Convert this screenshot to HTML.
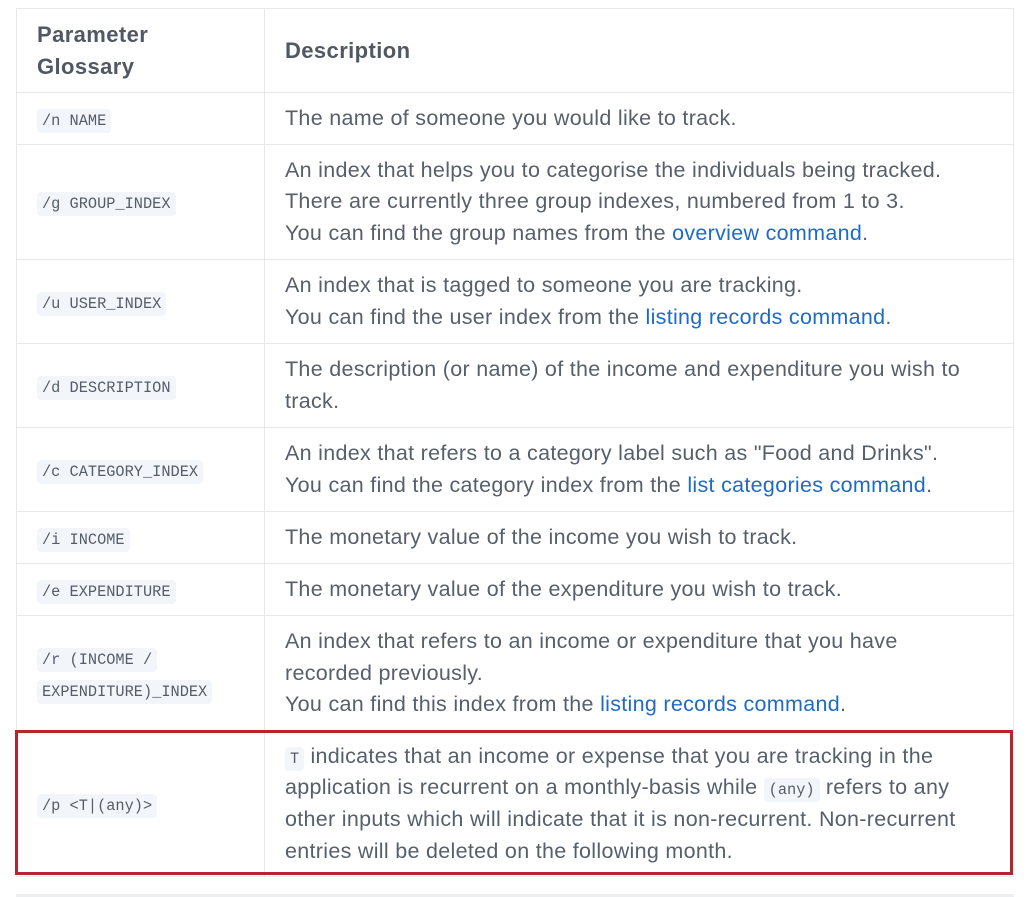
<!DOCTYPE html>
<html><head><meta charset="utf-8"><style>
body{margin:0;background:#fff;width:1030px;height:897px;overflow:hidden;font-family:"Liberation Sans",sans-serif;color:#575f6b}
table{position:absolute;left:16px;top:8px;border-collapse:collapse;width:998px}
td,th{border:1px solid #e6e8eb;padding:0 0 0 20px;vertical-align:middle;text-align:left;font-size:21.5px;letter-spacing:0.3px;line-height:31.6px;white-space:nowrap}
th{font-weight:bold;color:#505864;letter-spacing:0.4px;font-size:22px;line-height:32px}
td:first-child,th:first-child{width:227px}
code{font-family:"Liberation Mono",monospace;font-size:15.3px;letter-spacing:0;line-height:1;background:#f2f5f9;border-radius:4px;padding:3px 5px;color:#555d69}
a{color:#1f6bc4;text-decoration:none}
.red{position:absolute;left:15px;top:730px;width:992px;height:139px;border:3px solid #b5242f}
.bot{position:absolute;left:16px;top:894px;width:998px;height:3px;background:#eceef0}
</style></head><body>
<table>
<tr style="height:84px"><th>Parameter<br>Glossary</th><th>Description</th></tr>
<tr style="height:52px"><td><code>/n NAME</code></td><td>The name of someone you would like to track.</td></tr>
<tr style="height:115px"><td><code>/g GROUP_INDEX</code></td><td>An index that helps you to categorise the individuals being tracked.<br>There are currently three group indexes, numbered from 1 to 3.<br>You can find the group names from the <a>overview command</a>.</td></tr>
<tr style="height:84px"><td><code>/u USER_INDEX</code></td><td>An index that is tagged to someone you are tracking.<br>You can find the user index from the <a>listing records command</a>.</td></tr>
<tr style="height:84px"><td><code>/d DESCRIPTION</code></td><td>The description (or name) of the income and expenditure you wish to<br>track.</td></tr>
<tr style="height:84px"><td><code>/c CATEGORY_INDEX</code></td><td>An index that refers to a category label such as "Food and Drinks".<br>You can find the category index from the <a>list categories command</a>.</td></tr>
<tr style="height:52px"><td><code>/i INCOME</code></td><td>The monetary value of the income you wish to track.</td></tr>
<tr style="height:52px"><td><code>/e EXPENDITURE</code></td><td>The monetary value of the expenditure you wish to track.</td></tr>
<tr style="height:116px"><td><code>/r (INCOME /</code><br><code>EXPENDITURE)_INDEX</code></td><td>An index that refers to an income or expenditure that you have<br>recorded previously.<br>You can find this index from the <a>listing records command</a>.</td></tr>
<tr style="height:145px"><td><code>/p &lt;T|(any)&gt;</code></td><td><code>T</code> indicates that an income or expense that you are tracking in the<br>application is recurrent on a monthly-basis while <code>(any)</code> refers to any<br>other inputs which will indicate that it is non-recurrent. Non-recurrent<br>entries will be deleted on the following month.</td></tr>
</table>
<div class="red"></div>
<div class="bot"></div>
</body></html>
